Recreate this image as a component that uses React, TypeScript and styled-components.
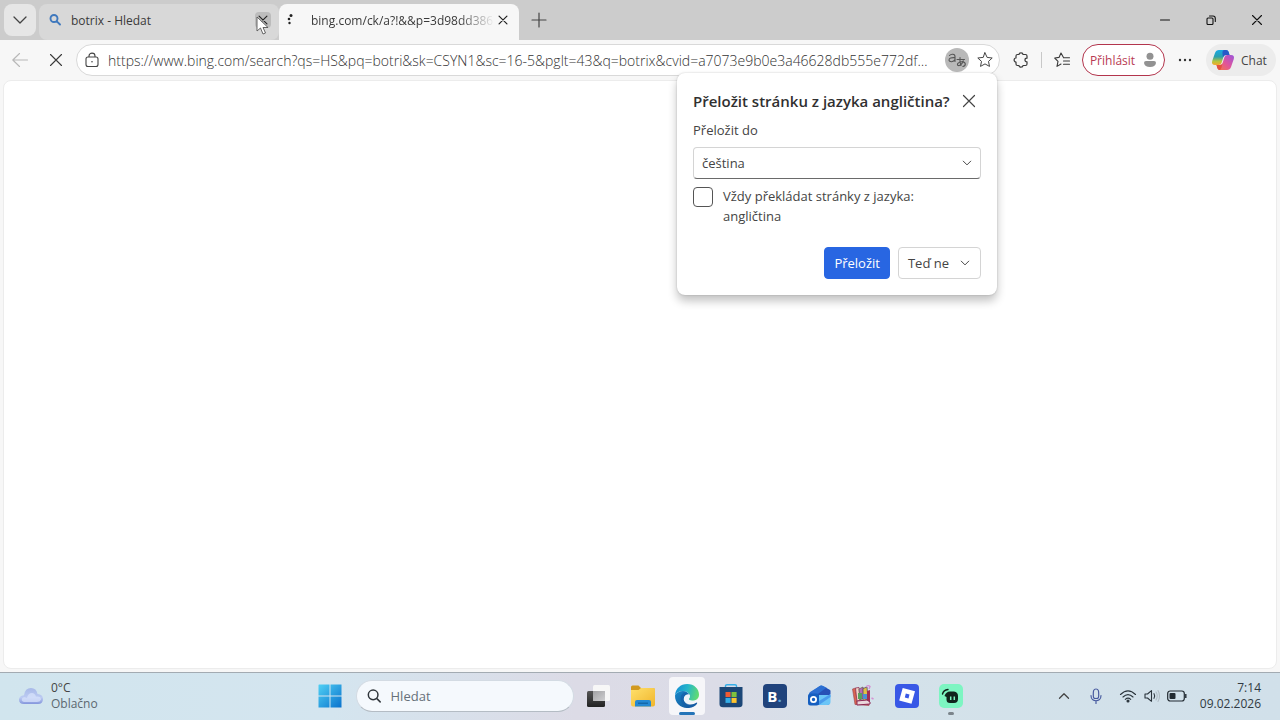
import React from "react";
import styled, { createGlobalStyle } from "styled-components";

const Global = createGlobalStyle`
  *, *::before, *::after { box-sizing: border-box; }
  body { margin: 0; background: #f7f7f7; }
  body, button, input, select { font-family: "Open Sans", "Noto Sans", sans-serif; }
  button, select { color: inherit; }
`;

const Desktop = styled.div`
  min-height: 100vh;
  display: flex;
  flex-direction: column;
  color: #444;
`;

const TabStrip = styled.header`
  display: flex;
  align-items: center;
  height: 40px;
  background: #cccccc;
`;

const PlainButton = styled.button`
  display: flex;
  align-items: center;
  justify-content: center;
  flex: none;
  padding: 0;
  border: 0;
  background: transparent;
`;

const TabMenuButton = styled(PlainButton)`
  width: 32px;
  height: 32px;
  margin: 0 3px 0 4px;
  border-radius: 8px;
  background: #e6e6e6;
`;

const Tab = styled.div<{ $active?: boolean }>`
  display: flex;
  align-items: center;
  align-self: flex-end;
  flex: 0 1 240px;
  min-width: 0;
  height: 36px;
  padding: 0 8px 4px;
  border-radius: ${(p) => (p.$active ? "8px 8px 0 0" : "8px")};
  background: ${(p) => (p.$active ? "#f7f7f7" : "#d8d8d8")};
`;

const TabIcon = styled.span`
  display: flex;
  flex: none;
  width: 24px;
`;

const TabTitle = styled.span<{ $fade?: boolean }>`
  flex: 1;
  min-width: 0;
  overflow: hidden;
  white-space: nowrap;
  font-size: 12px;
  line-height: 16px;
  padding-top: 2px;
  color: #3a3a3a;
  ${(p) => p.$fade && "mask-image: linear-gradient(90deg, #000 80%, transparent);"}
`;

const TabClose = styled(PlainButton)<{ $hover?: boolean }>`
  width: 16px;
  height: 16px;
  border-radius: 4px;
  color: #222;
  background: ${(p) => (p.$hover ? "#bcbcbc" : "transparent")};
`;

const NewTab = styled(PlainButton)`
  width: 40px;
  height: 40px;
`;

const WindowControls = styled.div`
  display: flex;
  margin-left: auto;
`;

const WindowButton = styled(PlainButton)`
  width: 46px;
  height: 40px;
  color: #111;
`;

const Toolbar = styled.nav`
  display: flex;
  align-items: center;
  height: 40px;
  padding: 0 4px 0 2px;
  background: #f7f7f7;
`;

const ToolButton = styled(PlainButton)<{ $dim?: boolean }>`
  width: 36px;
  height: 32px;
  color: ${(p) => (p.$dim ? "#b8b8b8" : "#3a3a3a")};
`;

const AddressBar = styled.div`
  position: relative;
  display: flex;
  align-items: center;
  flex: 1;
  min-width: 0;
  height: 32px;
  margin: 0 3px 0 2px;
  padding: 0 2px 0 7px;
  border: 1px solid #d9d9d9;
  border-radius: 16px;
  background: #fff;
`;

const AddressInput = styled.input`
  flex: 1;
  min-width: 0;
  margin: 0 8px;
  padding: 0;
  border: 0;
  outline: 0;
  background: transparent;
  color: #333;
  font-size: 14px;
  font-weight: 300;
  text-overflow: ellipsis;
`;

const TranslateBadge = styled(PlainButton)`
  width: 24px;
  height: 24px;
  border-radius: 50%;
  background: #b9b9b9;
`;

const StarButton = styled(PlainButton)`
  width: 24px;
  height: 24px;
  margin-left: 4px;
`;

const Divider = styled.span`
  width: 1px;
  height: 16px;
  margin: 0 2px;
  background: #c8c8c8;
`;

const SignIn = styled(PlainButton)`
  gap: 8px;
  width: 83px;
  height: 32px;
  margin: 0 2px;
  border: 1px solid #b3354d;
  border-radius: 16px;
  background: #fff;
  color: #b83a52;
  font-size: 12px;
`;

const Chat = styled(PlainButton)`
  justify-content: flex-start;
  gap: 6px;
  width: 70px;
  height: 32px;
  margin-left: 3px;
  padding-left: 5px;
  border-radius: 16px;
  background: #ececec;
  font-size: 12px;
`;

const Popup = styled.form`
  position: absolute;
  top: 28px;
  right: 2px;
  z-index: 2;
  width: 320px;
  padding: 16px;
  border-radius: 8px;
  background: #fff;
  box-shadow: 0 6px 10px rgba(0, 0, 0, 0.24), 0 0 2px rgba(0, 0, 0, 0.2);
  font-size: 13px;
  line-height: 20px;
`;

const PopupHeader = styled.div`
  display: flex;
  align-items: center;
  justify-content: space-between;
  height: 24px;
`;

const PopupTitle = styled.h2`
  margin: 0;
  white-space: nowrap;
  font-size: 15px;
  line-height: 24px;
  font-weight: 600;
  color: #303030;
`;

const PopupClose = styled(PlainButton)`
  width: 24px;
  height: 24px;
`;

const FieldLabel = styled.label`
  display: block;
  margin: 7px 0;
`;

const SelectBox = styled.div`
  position: relative;
  display: flex;
  align-items: center;

  svg {
    position: absolute;
    right: 8px;
    pointer-events: none;
  }
`;

const Select = styled.select`
  width: 100%;
  height: 32px;
  padding: 0 8px;
  appearance: none;
  border: 1px solid #d4d4d4;
  border-bottom-color: #6a6a6a;
  border-radius: 4px;
  background: #fff;
  font-size: 13px;
`;

const CheckRow = styled.label`
  display: flex;
  align-items: flex-start;
  gap: 10px;
  margin-top: 7px;
  padding-right: 40px;
`;

const Checkbox = styled.input`
  flex: none;
  width: 20px;
  height: 20px;
  margin: 1px 0 0;
  appearance: none;
  border: 1px solid #555;
  border-radius: 4px;
  background: #fff;
`;

const Actions = styled.div`
  display: flex;
  justify-content: flex-end;
  gap: 8px;
  margin-top: 21px;
`;

const ActionButton = styled(PlainButton)<{ $primary?: boolean }>`
  gap: 10px;
  height: 32px;
  padding: 0 9px;
  border: 1px solid ${(p) => (p.$primary ? "#2866e2" : "#d4d4d4")};
  border-radius: 4px;
  background: ${(p) => (p.$primary ? "#2866e2" : "#fff")};
  color: ${(p) => (p.$primary ? "#fff" : "#444")};
  font-size: 13px;
  font-weight: ${(p) => (p.$primary ? 500 : 400)};
`;

const Page = styled.main`
  flex: 1;
  margin: 0 3px 3px;
  border: 1px solid #ececec;
  border-radius: 8px;
  background: #fff;
`;

const Taskbar = styled.footer`
  display: grid;
  grid-template-columns: 1fr auto 1fr;
  align-items: center;
  height: 48px;
  padding-bottom: 1px;
  border-top: 1px solid #a3abb2;
  background: linear-gradient(90deg, #d1e5ee 0%, #d4e5ef 26%, #dcdbe6 45%, #dbdce7 56%, #d4e2ea 68%, #d1e0ea 100%);
`;

const Weather = styled.div`
  display: flex;
  align-items: center;
  gap: 7px;
  padding-left: 18px;
  font-size: 12px;
  line-height: 16px;
`;

const Condition = styled.div`
  color: #5c6870;
`;

const Apps = styled.div`
  display: flex;
  align-items: center;
`;

const AppButton = styled(PlainButton)`
  position: relative;
  width: 44px;
  height: 46px;
`;

const AppTile = styled.span<{ $active?: boolean }>`
  display: flex;
  align-items: center;
  justify-content: center;
  width: 36px;
  height: 38px;
  border-radius: 4px;
  background: ${(p) => (p.$active ? "rgba(255,255,255,0.75)" : "transparent")};
`;

const Indicator = styled.span<{ $active?: boolean }>`
  position: absolute;
  bottom: 4px;
  width: ${(p) => (p.$active ? 16 : 6)}px;
  height: 3px;
  border-radius: 2px;
  background: ${(p) => (p.$active ? "#2574b8" : "#7b848b")};
`;

const Search = styled.label`
  display: flex;
  align-items: center;
  gap: 10px;
  width: 218px;
  height: 32px;
  margin: 0 3px 0 4px;
  padding: 0 10px;
  border: 1px solid #d3dbe3;
  border-bottom-color: #b4bcc4;
  border-radius: 16px;
  background: #f5f9fd;
`;

const SearchInput = styled.input`
  width: 100%;
  min-width: 0;
  padding: 0;
  border: 0;
  background: transparent;
  font-size: 13px;
  &::placeholder { color: #667079; opacity: 1; }
`;

const Tray = styled.div`
  display: flex;
  align-items: center;
  justify-content: flex-end;
  padding-right: 19px;
`;

const TrayButton = styled(PlainButton)`
  width: 32px;
  height: 40px;
`;

const StatusGroup = styled(PlainButton)`
  gap: 7px;
  height: 40px;
  margin: 0 13px 0 7px;
`;

const Clock = styled.time`
  font-size: 12px;
  line-height: 16px;
  text-align: right;
  color: #303a42;
`;

const Cursor = styled.svg`
  position: absolute;
  left: 256px;
  top: 16px;
  z-index: 3;
  pointer-events: none;
`;

type IconProps = { size?: number; box?: number; d: string; w?: number; color?: string };

const Line = ({ size = 16, box = 16, d, w = 1.1, color = "currentColor" }: IconProps) => (
  <svg width={size} height={size} viewBox={`0 0 ${box} ${box}`} fill="none" stroke={color} strokeWidth={w} strokeLinecap="round" strokeLinejoin="round" aria-hidden="true">
    <path d={d} />
  </svg>
);

const CROSS = "M3.5 3.5L12.5 12.5M12.5 3.5L3.5 12.5";
const STAR = "M8 .8L10.1 5.4L15.2 6L11.5 9.4L12.5 14.4L8 11.9L3.5 14.4L4.5 9.4L.8 6L5.9 5.4Z";

const LockIcon = () => (
  <svg width="16" height="16" viewBox="0 0 16 16" fill="none" stroke="#444" strokeWidth="1.1" aria-hidden="true">
    <rect x="2" y="5" width="12" height="9.5" rx="2" />
    <path d="M5 5V4C5 0.2 11 0.2 11 4V5" />
    <circle cx="8" cy="9.8" r=".8" fill="#444" stroke="none" />
  </svg>
);

const TranslateIcon = () => (
  <svg width="20" height="18" viewBox="0 0 20 18" fill="none" stroke="#555" strokeWidth="1.1" strokeLinecap="round" aria-hidden="true">
    <path d="M2.5 4.5C4 2.7 8 2.5 8 5.6V10.5M8 6.7C4.5 6.4 2 7 2 8.9C2 11.5 6.8 11.2 8 8.6" />
    <path d="M10 8.5H17.5M13 6.5C12.6 10 13 12.5 14 14.5M16.3 9.7C15.7 12.5 13 15.2 11.2 14.5C9 13.4 12 10.5 15 10.7C19.5 11 19 15 15.8 15.5" />
  </svg>
);

const PuzzleIcon = () => (
  <Line w={1.2} d="M4.5 2.5H6C6 .3 10 .3 10 2.5H12.5Q14 2.5 14 4V6.2C11.3 6.2 11.3 9.8 14 9.8V12Q14 13.5 12.5 13.5H10C10 15.7 6 15.7 6 13.5H4.5Q3 13.5 3 12V10C.5 10 .5 6 3 6V4Q3 2.5 4.5 2.5Z" />
);

const FavouritesIcon = () => (
  <Line d="M9.2 5L7 1L5 5.4L.7 6L4 9.3L3 14.4L7 12M9.5 5.7H15.5M9.5 9H15.5M9.5 12.3H15.5" />
);

const PersonIcon = () => (
  <svg width="14" height="16" viewBox="0 0 14 16" fill="#929292" aria-hidden="true">
    <circle cx="7" cy="4.3" r="3.5" />
    <path d="M3 9H11Q13 9 13 11Q12.3 15 7 15Q1.7 15 1 11Q1 9 3 9Z" />
  </svg>
);

const CopilotIcon = () => (
  <svg width="24" height="22" viewBox="0 0 24 22" aria-hidden="true">
    <defs>
      <linearGradient id="cpA" x1="0" y1="0" x2="0" y2="1">
        <stop offset="0" stopColor="#18a9e5" /><stop offset=".45" stopColor="#2b9fae" /><stop offset=".75" stopColor="#b4c53c" /><stop offset="1" stopColor="#f5a82e" />
      </linearGradient>
      <linearGradient id="cpB" x1="1" y1="0" x2="0" y2="1">
        <stop offset="0" stopColor="#9a55dc" /><stop offset=".5" stopColor="#e0549b" /><stop offset="1" stopColor="#f8793f" />
      </linearGradient>
    </defs>
    <path d="M8 1H15Q17 1 17.7 3L18.5 6H15Q13 6 12.4 8L10.5 14Q9.8 16 7.8 16H4Q.2 16 1.2 12L4 4Q5 1 8 1Z" fill="url(#cpA)" />
    <path d="M13.5 1H15Q17 1 17.7 3L18.5 6H15Q12.8 6 12 8.2L11.5 5Q11 1 13.5 1Z" fill="#2759c8" />
    <path d="M16 21H9Q7 21 6.3 19L5.5 16H9Q11 16 11.6 14L13.5 8Q14.2 6 16.2 6H20Q23.8 6 22.8 10L20 18Q19 21 16 21Z" fill="url(#cpB)" />
    <path d="M5.5 16H9Q10.5 16 11.3 14.8L10.5 18.5Q9.8 21 8.5 21Q7 21 6.3 19Z" fill="#e2503f" />
  </svg>
);

const CloudIcon = () => (
  <svg width="26" height="18" viewBox="0 0 26 18" aria-hidden="true">
    <defs>
      <linearGradient id="cloud" x1="0" y1="0" x2="0" y2="1"><stop offset="0" stopColor="#a8b9e8" /><stop offset=".6" stopColor="#bccbf2" /><stop offset="1" stopColor="#8496dc" /></linearGradient>
    </defs>
    <path d="M6 17Q1 17 1 12.5Q1 9 6 8.2Q7 1 13 1Q18.5 1 19.5 7Q25 7.5 25 12Q25 17 20 17Z" fill="url(#cloud)" />
    <path d="M6 15Q3 14 4 11.5Q6 9.5 9 11Q10 6 14 6Q17 6 18 9.5Q23 9 23 12.5Q22 15 19 15Z" fill="#d7e2fb" opacity=".75" />
  </svg>
);

const StartIcon = () => (
  <svg width="24" height="24" viewBox="0 0 24 24" aria-hidden="true">
    <defs><linearGradient id="win" x1="0" y1="0" x2="1" y2="1"><stop offset="0" stopColor="#4fd0f4" /><stop offset="1" stopColor="#0a72cd" /></linearGradient></defs>
    <path d="M1 .5H11.5V11.5H.5V1ZM12.5 .5H23.5V11.5H12.5ZM.5 12.5H11.5V23.5H.5ZM12.5 12.5H23.5V23.5H12.5Z" fill="url(#win)" />
  </svg>
);

const TaskViewIcon = () => (
  <svg width="24" height="24" viewBox="0 0 24 24" aria-hidden="true">
    <defs>
      <linearGradient id="tv" x1="0" y1="0" x2="0" y2="1"><stop offset="0" stopColor="#555" /><stop offset="1" stopColor="#222" /></linearGradient>
      <linearGradient id="tvLap" x1="0" y1="0" x2="1" y2="1"><stop offset="0" stopColor="#a2a2a4" /><stop offset="1" stopColor="#cfcfd1" /></linearGradient>
    </defs>
    <rect x="0" y="7" width="18" height="16" rx="1.5" fill="url(#tv)" />
    <rect x="6" y="1" width="17" height="16" rx="1.5" fill="#f7f7f7" />
    <path d="M6 7H18V17H7.5Q6 17 6 15.5Z" fill="url(#tvLap)" />
  </svg>
);

const FolderIcon = () => (
  <svg width="26" height="24" viewBox="0 0 26 24" aria-hidden="true">
    <defs><linearGradient id="folder" x1="0" y1="0" x2="1" y2="1"><stop offset="0" stopColor="#ffe06b" /><stop offset="1" stopColor="#f0b52c" /></linearGradient></defs>
    <path d="M1 3Q1 1.5 2.5 1.5H8.5L11 4H23Q25 4 25 6V12H1Z" fill="#d29a20" />
    <path d="M1 6H8.5L11 4H23.5Q25 4 25 5.5V20.5Q25 22.5 23 22.5H3Q1 22.5 1 20.5Z" fill="url(#folder)" />
    <path d="M5 22.5V18Q5 16 7 16H19Q21 16 21 18V22.5Z" fill="#2489d3" />
    <path d="M8 18.5H18V20H8Z" fill="#1469aa" />
  </svg>
);

const EdgeIcon = () => (
  <svg width="26" height="26" viewBox="0 0 26 26" aria-hidden="true">
    <defs>
      <linearGradient id="edT" x1="0" y1=".3" x2="1" y2=".5"><stop offset="0" stopColor="#168ed5" /><stop offset=".5" stopColor="#26b7c9" /><stop offset="1" stopColor="#62dc70" /></linearGradient>
      <linearGradient id="edB" x1="0" y1="0" x2="1" y2="1"><stop offset="0" stopColor="#1789cb" /><stop offset="1" stopColor="#164e91" /></linearGradient>
    </defs>
    <path d="M1 12.5C1.4 5.5 6.5 1 13.2 1C20.3 1 25 6 25 11.5C25 15.5 22 17.8 18.5 17.8C16 17.8 14.6 16.9 15 15.8C17.6 12 13.6 7.8 9 8C5 8 2.4 10 1 12.5Z" fill="url(#edT)" />
    <path d="M1 12.5C2.6 9.6 5.5 8 9 8C12 8 14.6 9.8 15.7 12C13.2 10.5 9.8 12.5 9.8 16C9.8 20.5 15 23.6 20.5 20.8C22 20 23 19.3 23.2 20C22 22.7 18 25 13 25C6.5 25 .8 20 1 12.5Z" fill="url(#edB)" />
    <path d="M9.3 9.8C5.5 12.2 5.1 20.5 13 25C19 25 22.2 22.4 23.2 20C22.5 19.4 22 20 20.5 20.8C15 23 9.8 20 9.8 16C9.8 12.8 12 11.3 14.3 11.3C13.3 9.6 11 9 9.3 9.8Z" fill="#155da8" opacity=".65" />
    <path d="M15.7 11.8C13 10.7 9.8 12.7 9.8 16C9.8 19 14 21.3 18 20C20 19.4 22 18.2 23 17C20 18.4 14.3 18 14.9 15.7C15.7 14.7 16 13.3 15.7 11.8Z" fill="#eef5fa" />
  </svg>
);

const StoreIcon = () => (
  <svg width="24" height="24" viewBox="0 0 24 24" aria-hidden="true">
    <path d="M6.5 4V2Q6.5 .8 8 .8H16Q17.5 .8 17.5 2V4" fill="none" stroke="#35aee8" strokeWidth="1.4" />
    <path d="M.5 3H23.5V20Q23.5 23.3 20 23.3H4Q.5 23.3 .5 20Z" fill="#1c4777" />
    <path d="M6.5 8H11.6V13H6.5Z" fill="#f05b32" /><path d="M12.5 8H17.6V13H12.5Z" fill="#7fc23d" />
    <path d="M6.5 13.9H11.6V18.9H6.5Z" fill="#34aee7" /><path d="M12.5 13.9H17.6V18.9H12.5Z" fill="#ffc52f" />
  </svg>
);

const BookingTile = styled.span`
  display: flex;
  align-items: center;
  justify-content: center;
  width: 24px;
  height: 24px;
  border-radius: 4px;
  background: #20437c;
  color: #fff;
  font-size: 15px;
  line-height: 24px;
  font-weight: 700;
`;

const BookingDot = styled.span`
  color: #5ea7df;
`;

const OutlookIcon = () => (
  <svg width="24" height="24" viewBox="0 0 24 24" aria-hidden="true">
    <path d="M3 9L12 2.5Q14 1 16 2L23 6V18Q23 21 20 21H6Q3 21 3 18Z" fill="#2b7fe0" />
    <path d="M2 10Q2 8.5 3.5 7.7L12 2.5Q14 1 16 2L20 4L8 12L4 14Z" fill="#2c6fd2" />
    <path d="M8 12L19 4L23.5 6.5V10L12 17Z" fill="#2750b6" />
    <path d="M12 11H23.5V18Q23.5 21 20 21H12Z" fill="#6bc5f7" />
    <path d="M12 17L23.5 10V13L12 21Z" fill="#4a9bec" />
    <rect x="1" y="9.5" width="11" height="12" rx="2.5" fill="#155fc0" />
    <circle cx="6.5" cy="15.5" r="2.6" fill="none" stroke="#fff" strokeWidth="1.8" />
  </svg>
);

const BooksIcon = () => (
  <svg width="24" height="24" viewBox="0 0 24 24" aria-hidden="true">
    <path d="M1.5 5L4.5 4L6 18L18 19V21.5L4 20.5Z" fill="#d9644f" stroke="#9b4352" strokeWidth=".6" />
    <path d="M4.5 4L8 3.5L9 16L6 17.5Z" fill="#f1d6c8" stroke="#8f3053" strokeWidth=".8" />
    <path d="M8 5L12 3L13 14L9 16Z" fill="#b66bb5" stroke="#645b4b" strokeWidth=".7" />
    <path d="M12 4.5L16 3L17 15L12 17Z" fill="#dfc344" stroke="#473b61" strokeWidth=".7" />
    <path d="M7 9H11V15H7Z" fill="#58a15e" /><path d="M12 10H16V15H12Z" fill="#4d91d2" />
    <path d="M16 7L19 6V19L16 21Z" fill="#a32f55" />
    <path d="M6 17L16 16L19 18V20L6 21Z" fill="#ead7db" stroke="#8c2854" strokeWidth="1" />
    <path d="M15 3Q17 .5 19 2.5L18 5M20.5 14L22.5 15" fill="none" stroke="#d58fd2" strokeWidth="1.4" />
  </svg>
);

const RobloxIcon = () => (
  <svg width="24" height="24" viewBox="0 0 24 24" aria-hidden="true">
    <rect width="24" height="24" rx="4" fill="#3858e6" />
    <path fillRule="evenodd" d="M7.7 4L20 7.3L16.5 19.7L4.2 16.4ZM10.8 9.6L9.8 13.4L13.5 14.4L14.5 10.6Z" fill="#fff" />
  </svg>
);

const BotIcon = () => (
  <svg width="24" height="24" viewBox="0 0 24 24" aria-hidden="true">
    <rect width="24" height="24" rx="5" fill="#7df5c2" />
    <path d="M3.5 10Q4.5 6 9 5.5" fill="none" stroke="#10241d" strokeWidth="1.4" strokeLinecap="round" />
    <path d="M5.5 12Q7 7.5 11 7.5H15Q19 8 19 12V15Q19 19 15 19H11Q7.5 19 7.5 15.5V13Z" fill="#10241d" />
    <path d="M11.7 12.5V16M15.3 12.5V16" stroke="#7df5c2" strokeWidth="1.5" />
  </svg>
);

const StatusIcons = () => (
  <>
    <svg width="18" height="16" viewBox="0 0 18 16" fill="none" stroke="#29333b" strokeWidth="1.1" strokeLinecap="round" aria-hidden="true">
      <path d="M1.5 6.5Q9-.8 16.5 6.5M4 9Q9 4.3 14 9M6.3 11.3Q9 9 11.7 11.3" /><circle cx="9" cy="13" r="1" fill="#29333b" />
    </svg>
    <svg width="16" height="16" viewBox="0 0 16 16" fill="none" strokeWidth="1.1" strokeLinecap="round" strokeLinejoin="round" aria-hidden="true">
      <path d="M1 6H3.5L7.5 2.7V13.3L3.5 10H1ZM10 5.7Q11.5 8 10 10.3" stroke="#29333b" /><path d="M12 4Q14.5 8 12 12M14 2.5Q17 8 14 13.5" stroke="#b1bdc5" />
    </svg>
    <svg width="20" height="12" viewBox="0 0 20 12" aria-hidden="true">
      <rect x=".7" y="1" width="16.6" height="10" rx="2.5" fill="none" stroke="#222b32" strokeWidth="1.2" /><rect x="2.5" y="3" width="6" height="6" rx="1" fill="#222b32" /><path d="M18.8 4V8" stroke="#222b32" strokeWidth="1.4" />
    </svg>
  </>
);

const apps: { name: string; icon: React.ReactNode; active?: boolean; running?: boolean }[] = [
  { name: "Task view", icon: <TaskViewIcon /> },
  { name: "Explorer", icon: <FolderIcon /> },
  { name: "Edge", icon: <EdgeIcon />, active: true, running: true },
  { name: "Store", icon: <StoreIcon /> },
  { name: "Booking", icon: <BookingTile>B<BookingDot>.</BookingDot></BookingTile> },
  { name: "Outlook", icon: <OutlookIcon /> },
  { name: "WinRAR", icon: <BooksIcon /> },
  { name: "Roblox", icon: <RobloxIcon /> },
  { name: "Bot", icon: <BotIcon />, running: true },
];

const TranslatePopup = () => (
  <Popup onSubmit={(e) => e.preventDefault()}>
    <PopupHeader>
      <PopupTitle>Přeložit stránku z jazyka angličtina?</PopupTitle>
      <PopupClose type="button" aria-label="Zavřít"><Line d="M2.5 2.5L13.5 13.5M13.5 2.5L2.5 13.5" w={1.2} /></PopupClose>
    </PopupHeader>
    <FieldLabel htmlFor="language">Přeložit do</FieldLabel>
    <SelectBox>
      <Select id="language" defaultValue="cs"><option value="cs">čeština</option></Select>
      <Line size={12} d="M3 5.5L8 10.5L13 5.5" w={1.3} />
    </SelectBox>
    <CheckRow>
      <Checkbox type="checkbox" />
      <span>Vždy překládat stránky z jazyka: angličtina</span>
    </CheckRow>
    <Actions>
      <ActionButton type="submit" $primary>Přeložit</ActionButton>
      <ActionButton type="button">Teď ne<Line size={12} d="M3 5.5L8 10.5L13 5.5" w={1.3} /></ActionButton>
    </Actions>
  </Popup>
);

export default function App() {
  return (
    <Desktop>
      <Global />
      <TabStrip>
        <TabMenuButton aria-label="Nabídka karet"><Line d="M2 5L8 11L14 5" w={1.3} /></TabMenuButton>
        <Tab>
          <TabIcon><Line size={16} d="M10.5 6.5A3.5 3.5 0 1 1 3.5 6.5A3.5 3.5 0 1 1 10.5 6.5M9.8 9.3L13 12.5" w={1.9} color="#3f78bd" /></TabIcon>
          <TabTitle>botrix - Hledat</TabTitle>
          <TabClose $hover aria-label="Zavřít kartu"><Line size={14} d={CROSS} w={1.3} /></TabClose>
        </Tab>
        <Tab $active>
          <TabIcon>
            <svg width="8" height="14" viewBox="0 0 8 14" fill="#222" aria-hidden="true"><circle cx="4" cy="2.5" r="1.5" /><circle cx="2" cy="6" r="1.3" /><circle cx="2.5" cy="10" r="1.2" /></svg>
          </TabIcon>
          <TabTitle $fade>bing.com/ck/a?!&amp;&amp;p=3d98dd386</TabTitle>
          <TabClose aria-label="Zavřít kartu"><Line size={14} d={CROSS} w={1.4} /></TabClose>
        </Tab>
        <NewTab aria-label="Nová karta"><Line d="M8 1V15M1 8H15" w={1.2} /></NewTab>
        <WindowControls>
          <WindowButton aria-label="Minimalizovat"><Line size={10} box={10} d="M.5 5H9.5" /></WindowButton>
          <WindowButton aria-label="Obnovit"><Line size={10} box={10} d="M2 3H6Q7 3 7 4V8.5Q7 9.5 6 9.5H2Q1 9.5 1 8.5V4Q1 3 2 3M3.5 1H7Q9.3 1 9.3 3.5V6.5" /></WindowButton>
          <WindowButton aria-label="Zavřít"><Line size={10} box={10} d="M.5 .5L9.5 9.5M9.5 .5L.5 9.5" /></WindowButton>
        </WindowControls>
      </TabStrip>
      <Toolbar>
        <ToolButton $dim aria-label="Zpět"><Line d="M15.5 8H.8M7.5 1.5L.8 8L7.5 14.5" /></ToolButton>
        <ToolButton aria-label="Zastavit"><Line d="M2.5 2.5L13.5 13.5M13.5 2.5L2.5 13.5" /></ToolButton>
        <AddressBar>
          <LockIcon />
          <AddressInput aria-label="Adresa" readOnly value="https://www.bing.com/search?qs=HS&pq=botri&sk=CSYN1&sc=16-5&pglt=43&q=botrix&cvid=a7073e9b0e3a46628db555e772df…" />
          <TranslateBadge aria-label="Přeložit stránku"><TranslateIcon /></TranslateBadge>
          <StarButton aria-label="Přidat k oblíbeným"><Line d={STAR} w={1} /></StarButton>
          <TranslatePopup />
        </AddressBar>
        <ToolButton aria-label="Rozšíření"><PuzzleIcon /></ToolButton>
        <Divider />
        <ToolButton aria-label="Oblíbené"><FavouritesIcon /></ToolButton>
        <SignIn>Přihlásit<PersonIcon /></SignIn>
        <ToolButton aria-label="Další"><svg width="14" height="4" viewBox="0 0 14 4" fill="#333" aria-hidden="true"><circle cx="2" cy="2" r="1.2" /><circle cx="7" cy="2" r="1.2" /><circle cx="12" cy="2" r="1.2" /></svg></ToolButton>
        <Chat><CopilotIcon />Chat</Chat>
      </Toolbar>
      <Page />
      <Taskbar>
        <Weather><CloudIcon /><div><div>0°C</div><Condition>Oblačno</Condition></div></Weather>
        <Apps>
          <AppButton aria-label="Start"><StartIcon /></AppButton>
          <Search>
            <Line d="M12.5 6.7A5.5 5.5 0 1 1 1.5 6.7A5.5 5.5 0 1 1 12.5 6.7M11 10.7L15 14.7" w={1.7} color="#30363b" />
            <SearchInput placeholder="Hledat" aria-label="Hledat" />
          </Search>
          {apps.map((a) => (
            <AppButton key={a.name} aria-label={a.name}>
              <AppTile $active={a.active}>{a.icon}</AppTile>
              {a.running && <Indicator $active={a.active} />}
            </AppButton>
          ))}
        </Apps>
        <Tray>
          <TrayButton aria-label="Skryté ikony"><Line size={12} d="M2 11L8 5L14 11" w={1.7} /></TrayButton>
          <TrayButton aria-label="Mikrofon"><Line d="M8 1C5 1 5.3 4 5.3 7S5.5 10.5 8 10.5S10.7 10 10.7 7S11 1 8 1M3 7.5C3 14.5 13 14.5 13 7.5M8 13V15.5" color="#475a9f" w={1.2} /></TrayButton>
          <StatusGroup aria-label="Stav"><StatusIcons /></StatusGroup>
          <Clock>7:14<br />09.02.2026</Clock>
        </Tray>
      </Taskbar>
      <Cursor width="14" height="20" viewBox="0 0 14 20" aria-hidden="true">
        <path d="M1 1V15L4.5 12L7 18L9.5 17L7 11.5H12Z" fill="#fff" stroke="#555" strokeWidth=".9" />
      </Cursor>
    </Desktop>
  );
}
